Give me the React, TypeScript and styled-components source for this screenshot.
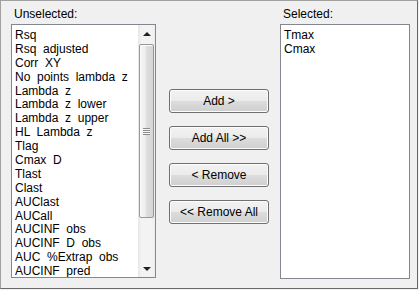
import styled, { createGlobalStyle } from "styled-components";

const unselected = [
  "Rsq",
  "Rsq  adjusted",
  "Corr  XY",
  "No  points  lambda  z",
  "Lambda  z",
  "Lambda  z  lower",
  "Lambda  z  upper",
  "HL  Lambda  z",
  "Tlag",
  "Cmax  D",
  "Tlast",
  "Clast",
  "AUClast",
  "AUCall",
  "AUCINF  obs",
  "AUCINF  D  obs",
  "AUC  %Extrap  obs",
  "AUCINF  pred",
];

const selected = ["Tmax", "Cmax"];

const buttons = ["Add >", "Add All >>", "< Remove", "<< Remove All"];

const Global = createGlobalStyle`
  body {
    margin: 0;
    background: #f0f0f0;
    font-family: "Liberation Sans", Arial, sans-serif;
    font-size: 12px;
    color: #000;
  }
`;

const Frame = styled.div`
  box-sizing: border-box;
  width: 418px;
  height: 289px;
  border: 1px solid;
  border-color: #a0a0a0 #696969 #696969 #a0a0a0;
  background: #f0f0f0;
  display: flex;
  padding: 7px 0 0 10px;
`;

const Column = styled.div<{ $width: number; $gap?: number }>`
  display: flex;
  flex-direction: column;
  width: ${(p) => p.$width}px;
  margin-left: ${(p) => p.$gap ?? 0}px;
`;

const Caption = styled.div`
  height: 13px;
  line-height: 13px;
  margin: 0 0 3px 3px;
`;

const ListBox = styled.div<{ $height: number }>`
  box-sizing: border-box;
  height: ${(p) => p.$height}px;
  border: 1px solid #828790;
  background: #fff;
  display: flex;
  overflow: hidden;
`;

const Items = styled.ul`
  list-style: none;
  margin: 0;
  padding: 3px 0 0 3px;
  flex: 1;
  overflow: hidden;
`;

const Item = styled.li`
  height: 13.9px;
  line-height: 14px;
  white-space: pre;
`;

const ScrollBar = styled.div`
  width: 17px;
  display: flex;
  flex-direction: column;
  background: linear-gradient(to right, #e6e6e6, #f3f3f3 20%, #f3f3f3 80%, #ececec);
`;

const ArrowCell = styled.div`
  height: 17px;
  display: flex;
  align-items: center;
  justify-content: center;
`;

const Arrow = styled.div<{ $down?: boolean }>`
  width: 0;
  height: 0;
  border-left: 4px solid transparent;
  border-right: 4px solid transparent;
  ${(p) =>
    p.$down
      ? "border-top: 4px solid #202020;"
      : "border-bottom: 4px solid #202020;"}
`;

const Thumb = styled.div`
  box-sizing: border-box;
  height: 174px;
  margin: 2px 1px 0 1px;
  border: 1px solid #979797;
  border-radius: 2px;
  background: linear-gradient(
    to right,
    #f5f5f5 0%,
    #ececec 50%,
    #dedede 50%,
    #d6d6d6 100%
  );
  box-shadow: inset 1px 1px 0 #fbfbfb;
  display: flex;
  align-items: center;
  justify-content: center;
`;

const Grip = styled.div`
  width: 7px;
  height: 7px;
  background: repeating-linear-gradient(
    to bottom,
    #8a8a8a 0 1px,
    #f8f8f8 1px 2px
  );
`;

const Spacer = styled.div`
  flex: 1;
`;

const ButtonStack = styled.div`
  display: flex;
  flex-direction: column;
  gap: 13px;
  margin-top: 81px;
  margin-left: 13px;
  width: 100px;
`;

const Button = styled.button`
  box-sizing: border-box;
  height: 24px;
  width: 100%;
  padding: 0;
  border: 1px solid #707070;
  border-radius: 3px;
  background: linear-gradient(
    to bottom,
    #f2f2f2 0%,
    #ebebeb 50%,
    #dddddd 50%,
    #cfcfcf 100%
  );
  box-shadow: inset 0 0 0 1px #fcfcfc;
  font-family: "Liberation Sans", Arial, sans-serif;
  font-size: 12px;
  color: #000;
`;

export default function App() {
  return (
    <>
      <Global />
      <Frame>
        <Column $width={145}>
          <Caption>Unselected:</Caption>
          <ListBox $height={254}>
            <Items>
              {unselected.map((name) => (
                <Item key={name}>{name}</Item>
              ))}
            </Items>
            <ScrollBar>
              <ArrowCell>
                <Arrow />
              </ArrowCell>
              <Thumb>
                <Grip />
              </Thumb>
              <Spacer />
              <ArrowCell>
                <Arrow $down />
              </ArrowCell>
            </ScrollBar>
          </ListBox>
        </Column>
        <ButtonStack>
          {buttons.map((label) => (
            <Button key={label}>{label}</Button>
          ))}
        </ButtonStack>
        <Column $width={130} $gap={11}>
          <Caption>Selected:</Caption>
          <ListBox $height={255}>
            <Items>
              {selected.map((name) => (
                <Item key={name}>{name}</Item>
              ))}
            </Items>
          </ListBox>
        </Column>
      </Frame>
    </>
  );
}
